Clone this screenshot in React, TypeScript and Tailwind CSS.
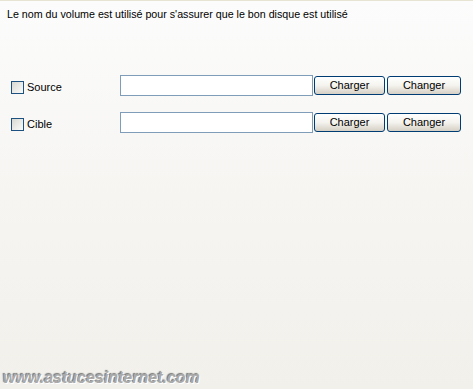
import React from "react";

const font = { fontFamily: '"Liberation Sans", Tahoma, sans-serif' };

function Row({ label }: { label: string }) {
  return (
    <div className="flex items-start h-[21px]">
      <div className="w-[120px] pl-[11px] flex items-center gap-[3px] mt-[6px]">
        <div className="w-[13px] h-[13px] border border-[#1c5180] bg-gradient-to-br from-[#d8d8d2] to-[#fbfbfb]" />
        <span className="text-[11px] leading-[13px] text-black">{label}</span>
      </div>
      <div className="w-[193px] h-[21px] border border-[#7f9db9] bg-white" />
      <div className="ml-[1px] mt-[1px] flex gap-[2px]">
        <button className="w-[71px] h-[19px] border border-[#003c74] rounded-[3px] bg-gradient-to-b from-[#ffffff] via-[#f4f3ee] to-[#d6d0c5] text-[11px] leading-[15px] text-black">
          Charger
        </button>
        <button className="w-[74px] h-[19px] border border-[#003c74] rounded-[3px] bg-gradient-to-b from-[#ffffff] via-[#f4f3ee] to-[#d6d0c5] text-[11px] leading-[15px] text-black">
          Changer
        </button>
      </div>
    </div>
  );
}

export default function App() {
  return (
    <div
      className="w-[473px] h-[389px] flex flex-col border-t border-[#e8e4d4] bg-gradient-to-b from-[#fcfcfc] via-[#f6f5f2] to-[#f1f0eb] overflow-hidden"
      style={font}
    >
      <div className="pl-[7px] pt-[7px] text-[10.7px] leading-[13px] text-black">
        Le nom du volume est utilisé pour s'assurer que le bon disque est utilisé
      </div>
      <div className="mt-[54px] flex flex-col gap-[16px]">
        <Row label="Source" />
        <Row label="Cible" />
      </div>
      <div className="flex-1" />
      <div
        className="pl-[3px] pb-[2px] text-[16px] leading-[18px] font-bold italic text-[#aaaaaa]"
        style={{ fontFamily: '"Liberation Sans", Arial, sans-serif', textShadow: "1px 1px 0 #fff, -1px -1px 1px #777" }}
      >
        www.astucesinternet.com
      </div>
    </div>
  );
}
